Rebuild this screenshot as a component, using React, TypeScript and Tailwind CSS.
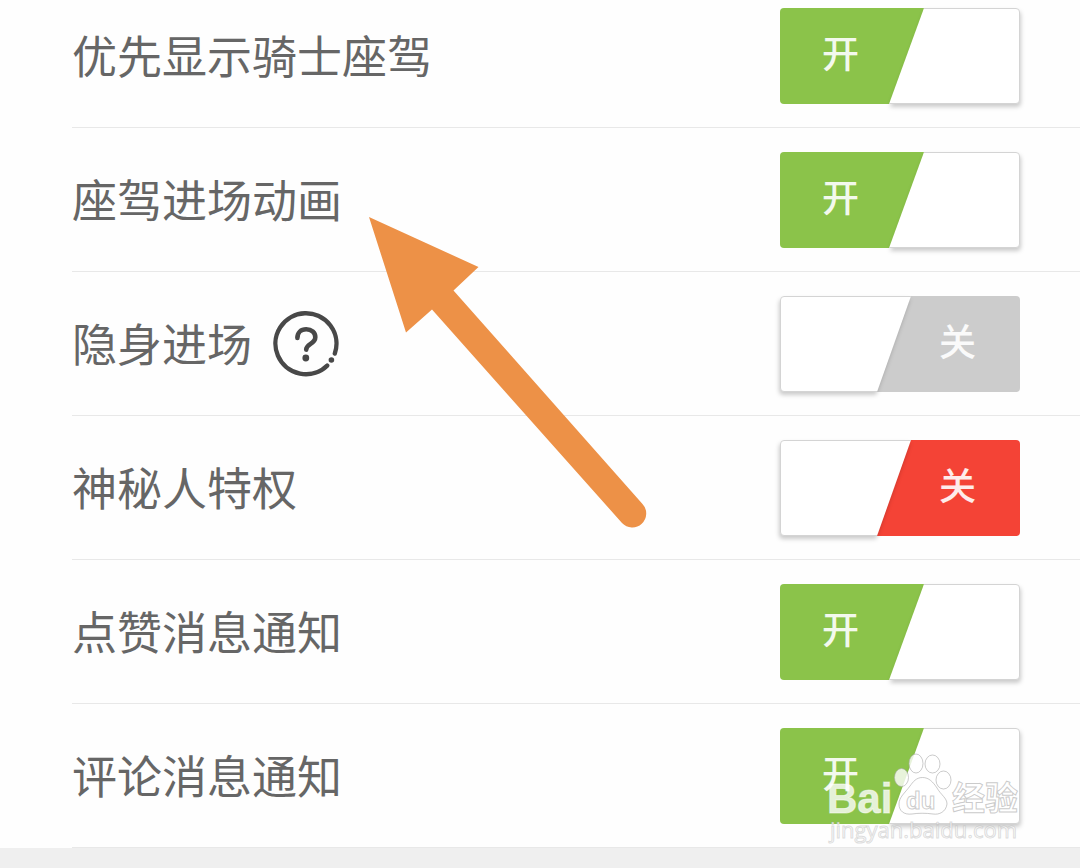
import { useState } from "react";

type Tone = "gray" | "red";

interface Setting {
  id: string;
  label: string;
  on: boolean;
  offTone?: Tone;
  help?: boolean;
}

const SETTINGS: Setting[] = [
  { id: "knight-mount", label: "优先显示骑士座驾", on: true },
  { id: "mount-animation", label: "座驾进场动画", on: true },
  { id: "stealth-entry", label: "隐身进场", on: false, offTone: "gray", help: true },
  { id: "mystery-person", label: "神秘人特权", on: false, offTone: "red" },
  { id: "like-notice", label: "点赞消息通知", on: true },
  { id: "comment-notice", label: "评论消息通知", on: true },
];

function Switch({
  id,
  checked,
  offTone = "gray",
  onChange,
}: {
  id: string;
  checked: boolean;
  offTone?: Tone;
  onChange: (next: boolean) => void;
}) {
  const offColor = offTone === "red" ? "bg-[#f44336]" : "bg-[#cccccc]";
  return (
    <label htmlFor={id} className="grid h-24 w-60 shrink-0 cursor-pointer text-[37px] font-medium text-white/90">
      <input
        id={id}
        type="checkbox"
        role="switch"
        className="sr-only"
        checked={checked}
        onChange={(e) => onChange(e.target.checked)}
      />
      {checked ? (
        <>
          <span className="col-start-1 row-start-1 flex items-center rounded bg-[#8bc34a] pb-1.5 pl-[42px] [clip-path:polygon(0_0,145px_0,111px_100%,0_100%)]">
            开
          </span>
          <span className="col-start-1 row-start-1 grid drop-shadow-[1px_3px_2px_rgba(0,0,0,0.2)]">
            <span className="rounded border border-[#d4d4d4] bg-white [clip-path:polygon(144px_0,100%_0,100%_100%,109px_100%)]" />
          </span>
        </>
      ) : (
        <>
          <span
            className={`col-start-1 row-start-1 flex items-center justify-end rounded pr-11 pb-1.5 ${offColor} [clip-path:polygon(130px_0,100%_0,100%_100%,96px_100%)]`}
          >
            关
          </span>
          <span className="col-start-1 row-start-1 grid drop-shadow-[-1px_3px_2px_rgba(0,0,0,0.2)]">
            <span className="rounded border border-[#d4d4d4] bg-white [clip-path:polygon(0_0,131px_0,97px_100%,0_100%)]" />
          </span>
        </>
      )}
    </label>
  );
}

function HelpIcon() {
  return (
    <svg viewBox="0 0 66 66" className="size-[66px]" fill="none" stroke="#484848" strokeLinecap="round" aria-hidden="true">
      <path d="M61.8 42.6A30.5 30.5 0 1 0 54.2 54.6" strokeWidth="4.4" />
      <circle cx="58.4" cy="49" r="2.8" fill="#484848" stroke="none" />
      <path
        d="M24.4 27C24.4 21.4 28 18.3 33.2 18.3C38.6 18.3 42.3 21.7 42.3 26.2C42.3 33 33.3 32.6 33.2 38.6"
        strokeWidth="4.6"
      />
      <circle cx="32.8" cy="47" r="3.4" fill="#484848" stroke="none" />
    </svg>
  );
}

function PointerArrow() {
  return (
    <svg
      viewBox="369 217 278 311"
      className="pointer-events-none absolute top-[217px] left-[369px] h-[311px] w-[278px]"
      fill="#ed9147"
      aria-hidden="true"
    >
      <path d="M369 217L478.500 267L453.500 290.500L642.500 504A13.800 13.800 0 0 1 622 523L432 309.500L406 332.500Z" />
    </svg>
  );
}

function Watermark() {
  return (
    <svg
      viewBox="0 -4 200 96"
      className="pointer-events-none absolute right-[56px] bottom-0 h-24 w-[200px]"
      fill="#ffffff"
      fillOpacity="0.8"
      stroke="#a8a8a8"
      strokeOpacity="0.6"
      strokeWidth="1"
    >
      <text
        x="3"
        y="57"
        fontFamily="'Liberation Sans', sans-serif"
        fontWeight="700"
        fontSize="42"
        stroke="#ffffff"
        strokeOpacity="0.5"
      >
        Bai
      </text>
      <ellipse cx="77.500" cy="21.500" rx="7" ry="9" />
      <ellipse cx="92" cy="7.500" rx="7" ry="9.500" />
      <ellipse cx="108.500" cy="8" rx="7.500" ry="9" />
      <ellipse cx="119.500" cy="24" rx="7.500" ry="9" />
      <path d="M98.500 21.500C105 21.500 109 26 113 32C117 39 123 42 123 48C122 56 115 59 109 58C102 57 94 57 88 58C80 59 75 55 75 48C75 41 81 37 86 30C89 26 92 21.500 98.500 21.500Z" />
      <text x="82" y="53" fontFamily="'Liberation Sans', sans-serif" fontWeight="700" fontSize="24" fillOpacity="0.9">
        du
      </text>
      <text x="128" y="54" fontFamily="'Noto Sans CJK SC', sans-serif" fontWeight="700" fontSize="33">
        经验
      </text>
      <text x="6" y="82" fontFamily="'Open Sans', sans-serif" fontWeight="400" fontSize="22" strokeOpacity="0.4">
        jingyan.baidu.com
      </text>
    </svg>
  );
}

export default function App() {
  const [values, setValues] = useState<Record<string, boolean>>(
    Object.fromEntries(SETTINGS.map((s) => [s.id, s.on])),
  );

  return (
    <div className="relative min-h-screen bg-[#efefef] font-['Noto_Sans_CJK_SC',sans-serif]">
      <main className="relative bg-[#fefefe]">
        <ul className="pl-[72px]">
          {SETTINGS.map((s) => (
            <li
              key={s.id}
              className="flex items-center justify-between border-b border-[#e8e8e8] pt-6 pr-[60px] pb-[23px] first:pt-2"
            >
              <div className="flex items-center gap-[21px]">
                <label htmlFor={s.id} className="pb-0.5 text-[45px] leading-[94px] whitespace-nowrap text-[#666666]">
                  {s.label}
                </label>
                {s.help && (
                  <button type="button" aria-label="帮助" className="cursor-pointer">
                    <HelpIcon />
                  </button>
                )}
              </div>
              <Switch
                id={s.id}
                checked={values[s.id]}
                offTone={s.offTone}
                onChange={(next) => setValues((v) => ({ ...v, [s.id]: next }))}
              />
            </li>
          ))}
        </ul>
        <Watermark />
      </main>
      <PointerArrow />
    </div>
  );
}
